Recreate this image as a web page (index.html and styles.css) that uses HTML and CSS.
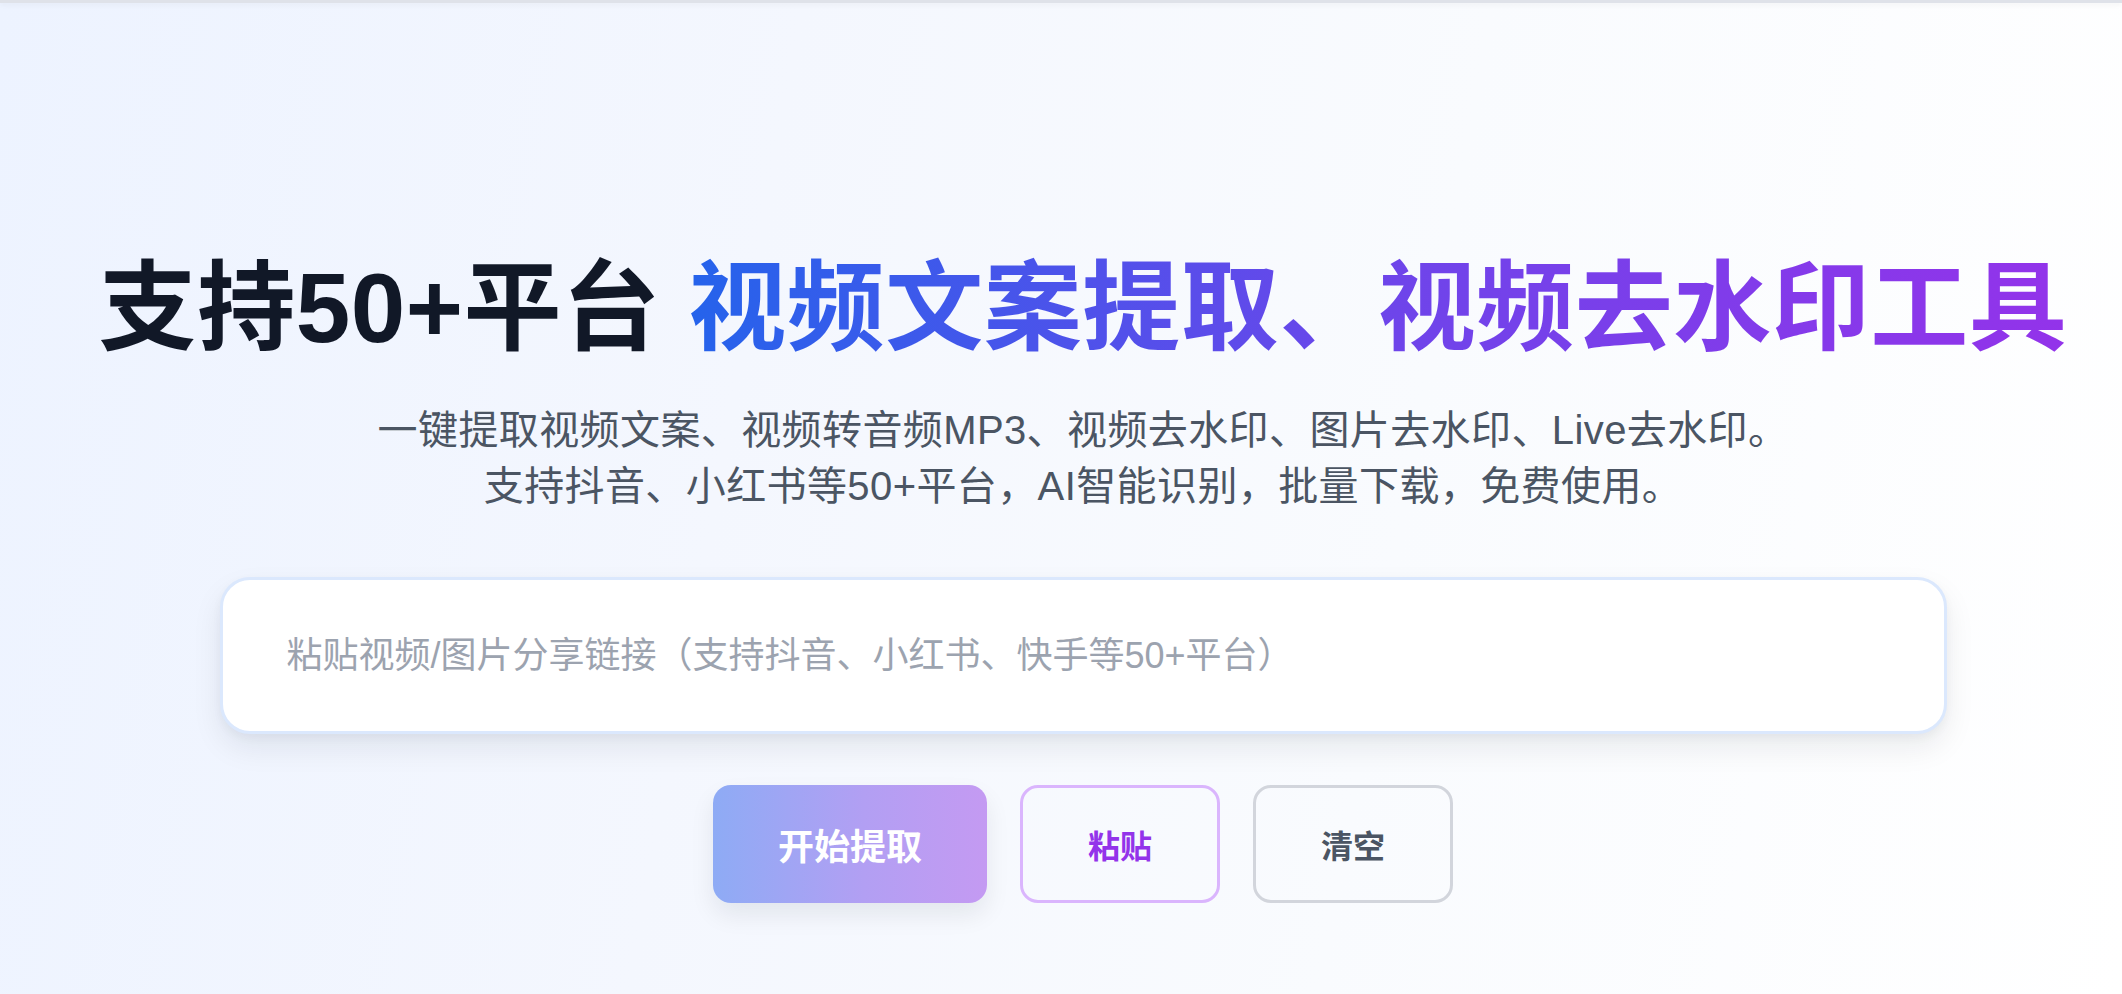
FILE: index.html
```html
<!DOCTYPE html>
<html lang="zh-CN">
<head>
<meta charset="utf-8">
<title>视频文案提取、视频去水印工具</title>
<link rel="stylesheet" href="styles.css">
</head>
<body>
<div class="topbar"></div>
<main class="hero">
  <h1 class="title">支持50+平台 <span class="grad">视频文案提取、视频去水印工具</span></h1>
  <p class="subtitle">一键提取视频文案、视频转音频MP3、视频去水印、图片去水印、Live去水印。<br>支持抖音、小红书等50+平台，AI智能识别，批量下载，免费使用。</p>
  <div class="search">
    <input class="search-input" type="text" placeholder="粘贴视频/图片分享链接（支持抖音、小红书、快手等50+平台）">
  </div>
  <div class="actions">
    <button class="btn btn-primary" type="button">开始提取</button>
    <button class="btn btn-paste" type="button">粘贴</button>
    <button class="btn btn-clear" type="button">清空</button>
  </div>
</main>
</body>
</html>
```

FILE: styles.css
```css
html, body {
  margin: 0;
  padding: 0;
}

body {
  min-height: 100vh;
  font-family: "Liberation Sans", "Noto Sans CJK SC", sans-serif;
  background: linear-gradient(100deg, #edf3ff 0%, #f4f7fe 35%, #f9fbfe 65%, #ffffff 100%);
  overflow: hidden;
}

.topbar {
  height: 3px;
  background: #dfe2e9;
  box-shadow: 0 2px 5px rgba(0, 0, 0, 0.05);
}

.hero {
  padding: 244px 0 0 44px;
  display: flex;
  flex-direction: column;
  align-items: center;
  text-align: center;
}

.title {
  margin: 0;
  font-size: 98px;
  line-height: 122px;
  font-weight: 700;
  letter-spacing: 0.5px;
  color: #111827;
  white-space: nowrap;
}

.grad {
  background: linear-gradient(90deg, #2563eb 0%, #6d45ea 50%, #9333ea 100%);
  -webkit-background-clip: text;
  background-clip: text;
  color: transparent;
}

.subtitle {
  margin: 33px 0 0;
  font-size: 40px;
  line-height: 56px;
  letter-spacing: 0.4px;
  color: #4b5563;
  white-space: nowrap;
}

.search {
  margin-top: 63px;
  width: 1727px;
}

.search-input {
  box-sizing: border-box;
  width: 100%;
  height: 157px;
  padding: 0 64px;
  border: 3px solid #dbe8fd;
  border-radius: 30px;
  background: #ffffff;
  font-family: "Liberation Sans", "Noto Sans CJK SC", sans-serif;
  font-size: 36px;
  color: #111827;
  outline: none;
  box-shadow: 0 14px 30px rgba(15, 23, 42, 0.08), 0 4px 10px rgba(15, 23, 42, 0.04);
}

.search-input::placeholder {
  color: #9ca3af;
}

.actions {
  margin-top: 51px;
  display: flex;
  gap: 33px;
  justify-content: center;
}

.btn {
  box-sizing: border-box;
  height: 118px;
  padding: 0 65px;
  border-radius: 18px;
  font-family: "Liberation Sans", "Noto Sans CJK SC", sans-serif;
  font-weight: 700;
  font-size: 32px;
  background: transparent;
  cursor: pointer;
}

.btn-primary {
  border: 0;
  font-size: 36px;
  color: #ffffff;
  background: linear-gradient(90deg, #8eabf5 0%, #b29ff3 55%, #c49af2 100%);
  box-shadow: 0 12px 24px rgba(15, 23, 42, 0.08);
}

.btn-paste {
  border: 3px solid #dab5fd;
  color: #9333ea;
}

.btn-clear {
  border: 3px solid #d2d5dc;
  color: #4b5563;
}
```
